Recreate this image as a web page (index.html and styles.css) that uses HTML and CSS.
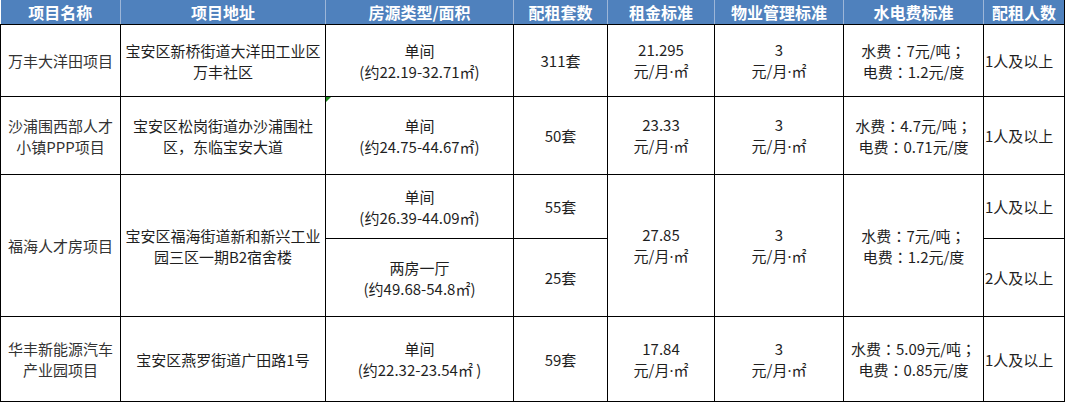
FILE: index.html
```html
<!DOCTYPE html>
<html lang="zh-CN">
<head>
<meta charset="utf-8">
<title>宝安区人才住房</title>
<link rel="stylesheet" href="styles.css">
</head>
<body>
<table class="grid">
  <colgroup>
    <col class="c1"><col class="c2"><col class="c3"><col class="c4"><col class="c5"><col class="c6"><col class="c7"><col class="c8">
  </colgroup>
  <thead>
    <tr class="head">
      <th>项目名称</th><th>项目地址</th><th>房源类型/面积</th><th>配租套数</th><th>租金标准</th><th>物业管理标准</th><th>水电费标准</th><th>配租人数</th>
    </tr>
  </thead>
  <tbody>
    <tr class="r1">
      <td class="name">万丰大洋田项目</td>
      <td>宝安区新桥街道大洋田工业区<br>万丰社区</td>
      <td>单间<br>(约22.19-32.71㎡)</td>
      <td>311套</td>
      <td>21.295<br>元/月<span class="dot">·</span>㎡</td>
      <td>3<br>元/月<span class="dot">·</span>㎡</td>
      <td>水费<span class="p" lang="zh-TW">：</span>7元/吨<span class="p" lang="zh-TW">；</span><br>电费<span class="p" lang="zh-TW">：</span>1.2元/度</td>
      <td class="ppl">1人及以上</td>
    </tr>
    <tr class="r2">
      <td class="name">沙浦围西部人才<br>小镇PPP项目</td>
      <td>宝安区松岗街道办沙浦围社<br>区，东临宝安大道</td>
      <td class="flag"><span class="tri"></span>单间<br>(约24.75-44.67㎡)</td>
      <td>50套</td>
      <td>23.33<br>元/月<span class="dot">·</span>㎡</td>
      <td>3<br>元/月<span class="dot">·</span>㎡</td>
      <td>水费<span class="p" lang="zh-TW">：</span>4.7元/吨<span class="p" lang="zh-TW">；</span><br>电费<span class="p" lang="zh-TW">：</span>0.71元/度</td>
      <td class="ppl">1人及以上</td>
    </tr>
    <tr class="r3a">
      <td class="name" rowspan="2">福海人才房项目</td>
      <td rowspan="2">宝安区福海街道新和新兴工业<br>园三区一期B2宿舍楼</td>
      <td>单间<br>(约26.39-44.09㎡)</td>
      <td>55套</td>
      <td rowspan="2">27.85<br>元/月<span class="dot">·</span>㎡</td>
      <td rowspan="2">3<br>元/月<span class="dot">·</span>㎡</td>
      <td rowspan="2">水费<span class="p" lang="zh-TW">：</span>7元/吨<span class="p" lang="zh-TW">；</span><br>电费<span class="p" lang="zh-TW">：</span>1.2元/度</td>
      <td class="ppl">1人及以上</td>
    </tr>
    <tr class="r3b">
      <td>两房一厅<br>(约49.68-54.8㎡)</td>
      <td>25套</td>
      <td class="ppl">2人及以上</td>
    </tr>
    <tr class="r4">
      <td class="name">华丰新能源汽车<br>产业园项目</td>
      <td>宝安区燕罗街道广田路1号</td>
      <td>单间<br>(约22.32-23.54㎡ )</td>
      <td>59套</td>
      <td>17.84<br>元/月<span class="dot">·</span>㎡</td>
      <td>3<br>元/月<span class="dot">·</span>㎡</td>
      <td class="wide">水费<span class="p" lang="zh-TW">：</span>5.09元/吨<span class="p" lang="zh-TW">；</span><br>电费<span class="p" lang="zh-TW">：</span>0.85元/度</td>
      <td class="ppl">1人及以上</td>
    </tr>
  </tbody>
</table>
</body>
</html>
```
FILE: styles.css
```css
html, body {
  margin: 0;
  padding: 0;
  background: #ffffff;
}
.grid {
  border-collapse: collapse;
  table-layout: fixed;
  width: 1064px;
  font-family: "Noto Sans CJK SC", "Noto Sans", sans-serif;
  font-size: 15px;
  color: #1f1f1f;
}
.c1 { width: 120px; }
.c2 { width: 205px; }
.c3 { width: 188px; }
.c4 { width: 94px; }
.c5 { width: 107px; }
.c6 { width: 129px; }
.c7 { width: 140px; }
.c8 { width: 81px; }
.head th {
  background: #4f81bd;
  color: #ffffff;
  font-weight: bold;
  font-size: 16px;
  height: 24px;
  padding: 0;
  line-height: 20px;
  border-left: 1px solid #9db6d8;
  border-right: 1px solid #9db6d8;
  border-bottom: 1px solid #000000;
  white-space: nowrap;
  overflow: hidden;
}
.head th:first-child { border-left: none; }
.head th:last-child { border-right: 1px solid #000000; }
td {
  border: 1px solid #000000;
  padding: 0;
  text-align: center;
  vertical-align: middle;
  line-height: 21px;
  white-space: nowrap;
}
td.name { color: #333333; }
td.ppl {
  text-align: left;
  padding-left: 1px;
}
td.wide { overflow: visible; }
td.flag { position: relative; }
.dot {
  font-family: "Noto Sans", "DejaVu Sans", sans-serif;
}
.p {
  font-family: "Noto Sans CJK TC", "Noto Sans CJK SC", sans-serif;
}
.tri {
  position: absolute;
  left: 0;
  top: 0;
  width: 0;
  height: 0;
  border-top: 5px solid #1a8a1a;
  border-right: 5px solid transparent;
}
.r1 td { height: 71px; }
.r2 td { height: 77px; }
.r3a td { height: 63px; }
.r3b td { height: 77px; }
.r4 td { height: 84px; }
```
